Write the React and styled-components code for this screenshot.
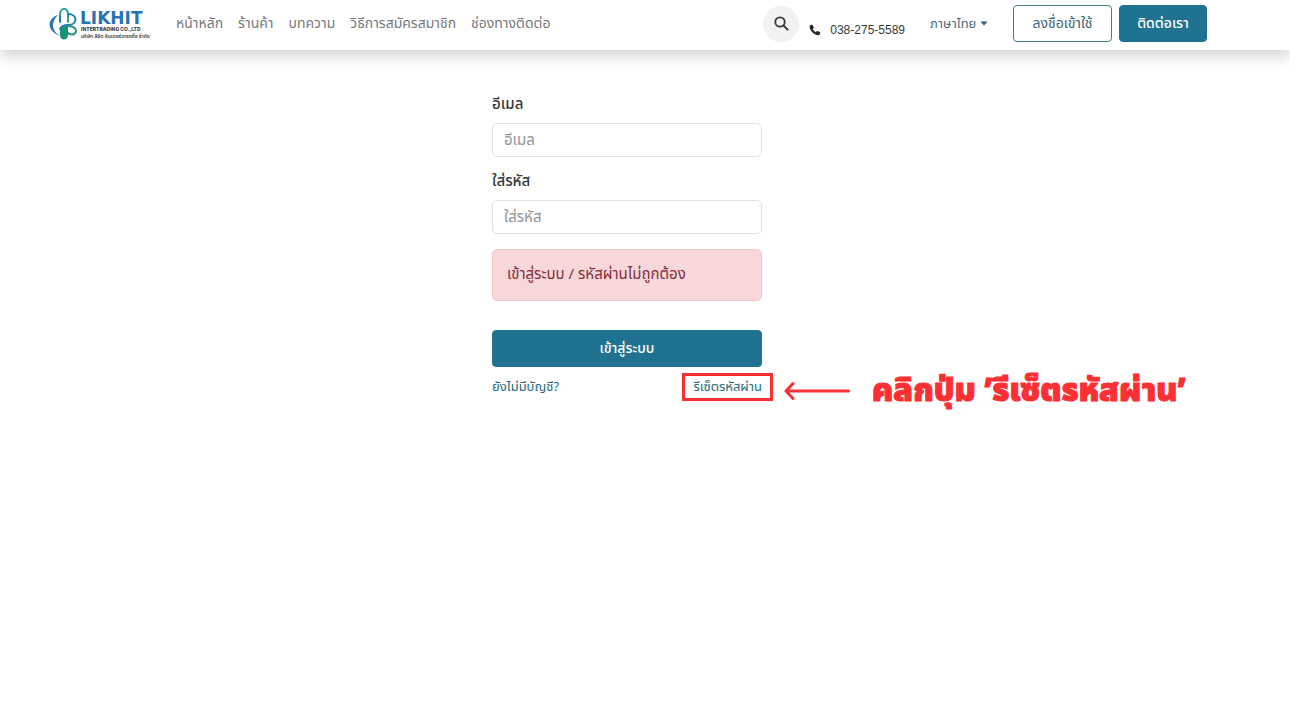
import React from "react";
import styled, { createGlobalStyle } from "styled-components";

const thai = `"Noto Sans Thai", "Noto Sans", "Liberation Sans", sans-serif`;
const teal = "#1f7391";
const red = "#fb3034";

const GlobalStyle = createGlobalStyle`
  *, *::before, *::after { box-sizing: border-box; }
  body { margin: 0; background: #fff; color: #33383d; font: 15px/20px ${thai}; }
  button, input, select { font: inherit; }
  a { text-decoration: none; }
`;

const Header = styled.header`
  display: flex;
  align-items: center;
  min-height: 50px;
  padding: 0 83px 3px 48px;
  background: #fff;
  box-shadow: 0 6px 16px rgba(0, 0, 0, 0.18);
`;

const Brand = styled.a`
  display: flex;
  margin-right: 30px;
`;

const Nav = styled.nav`
  display: flex;
  flex: 1;
  gap: 15px;
`;

const NavLink = styled.a`
  color: #76797c;
  font-size: 14px;
  white-space: nowrap;
`;

const Tools = styled.div`
  display: flex;
  align-items: center;
`;

const SearchButton = styled.button`
  display: grid;
  place-items: center;
  width: 36px;
  height: 36px;
  padding: 0;
  border: 0;
  border-radius: 50%;
  background: #f2f2f2;
`;

const Phone = styled.a`
  display: flex;
  align-items: center;
  gap: 9px;
  margin: 12px 25px 0 10px;
  color: #34383c;
  font-family: "Liberation Sans", sans-serif;
  font-size: 12px;
  white-space: nowrap;
`;

const Language = styled.label`
  display: flex;
  align-items: center;
  margin-right: 25px;
  color: #48697a;
`;

const LanguageSelect = styled.select`
  appearance: none;
  width: 50px;
  height: 28px;
  padding: 0;
  border: 0;
  background: transparent;
  color: inherit;
  font-size: 13px;
`;

const Button = styled.button`
  width: ${(p) => p.$width};
  height: 37px;
  padding: 0;
  border: 1px solid ${(p) => (p.$outline ? "#447f88" : teal)};
  border-radius: 4px;
  background: ${(p) => (p.$outline ? "#fff" : teal)};
  color: ${(p) => (p.$outline ? "#3d6678" : "#fff")};
  font-size: 14px;
  font-weight: ${(p) => (p.$outline ? 400 : 500)};
  white-space: nowrap;
`;

const Actions = styled.div`
  display: flex;
  gap: 7px;
`;

const Main = styled.main`
  display: flex;
  justify-content: center;
  padding: 45px 36px 48px 0;
`;

const Form = styled.form`
  width: 270px;
`;

const Field = styled.div`
  display: flex;
  flex-direction: column;
  gap: 8px;
  margin-bottom: 15px;
`;

const FieldLabel = styled.label`
  font-weight: 500;
`;

const Input = styled.input`
  width: 100%;
  height: 34px;
  padding: 0 11px;
  border: 1px solid #dfe1e3;
  border-radius: 5px;
  background: #fff;
  &::placeholder { color: #929598; opacity: 1; }
`;

const Alert = styled.p`
  margin: 0 0 29px;
  padding: 15px 14px;
  border: 1px solid #f4c4ca;
  border-radius: 5px;
  background: #f8d7da;
  color: #842d38;
`;

const Links = styled.div`
  display: flex;
  justify-content: space-between;
  padding-top: 10px;
`;

const TextLink = styled.a`
  position: relative;
  color: #286b7e;
  font-size: 13px;
  white-space: nowrap;
`;

const Highlight = styled.span`
  position: absolute;
  inset: -4px -11px -4px -11px;
  border: 3px solid ${red};
`;

const Callout = styled.span`
  position: absolute;
  top: -6px;
  left: 100%;
  display: flex;
  align-items: center;
  gap: 22px;
  margin-left: 22px;
  color: ${red};
  font-size: 32px;
  font-weight: 900;
  line-height: 40px;
  -webkit-text-stroke: 1px ${red};
`;

const LogoDrawing = styled.svg`
  display: block;
  overflow: visible;
`;

const Logo = () => (
  <LogoDrawing width="98" height="36" viewBox="0 0 98 36" role="img" aria-label="Likhit Intertrading">
    <g fill="none" strokeLinecap="round">
      <path d="M10 9C-2 13-1 25 12 30C3 24 3 16 10 9Z" fill="#2878b8" />
      <path d="M12 9C12 1 20 1 20 8V16" stroke="#2aa78a" strokeWidth="2" />
      <path d="M12 10V16M20 8C30 8 30 19 20 19C16 19 13 20 12 23" stroke="#2878b8" strokeWidth="2" />
      <path d="M20 20C28 20 30 26 26 28C24 29 21 28 20 27" stroke="#289579" strokeWidth="2" />
      <path d="M12 23C14 20 17 20 20 20V29C20 35 12 35 12 29Z" fill="#159278" />
    </g>
    <text x="32" y="18" fill="#2874b2" fontFamily="DejaVu Sans, sans-serif" fontSize="17" fontWeight="700">LIKHIT</text>
    <text x="33" y="25" fill="#3c4148" fontFamily="Inter, sans-serif" fontSize="5" fontWeight="800">INTERTRADING CO.,LTD</text>
    <text x="33" y="32" fill="#34383e" fontFamily="Noto Sans Thai, sans-serif" fontSize="5" fontWeight="600">บริษัท ลิขิต อินเตอร์เทรดดิ้ง จำกัด</text>
  </LogoDrawing>
);

const SearchIcon = () => (
  <svg width="15" height="15" viewBox="0 0 15 15" fill="none" stroke="#33373b" aria-hidden="true">
    <circle cx="6" cy="6" r="4.700" strokeWidth="1.800" />
    <path d="m9.600 9.600 4 4" strokeWidth="2" strokeLinecap="round" />
  </svg>
);

const PhoneIcon = () => (
  <svg width="12" height="12" viewBox="0 0 12 12" aria-hidden="true">
    <path fill="#24282c" d="M2.7.7 1 1.5C.6 2 .5 2.5.6 3.1c.7 4.3 4.1 7.7 8.4 8.2.7.1 1.2-.1 1.5-.6l.8-1.5c.2-.4 0-.8-.4-1L8.700 7.100c-.3-.2-.7-.1-1 .2l-.9 1C5.400 7.600 4.300 6.500 3.600 5.100l1-.9c.3-.3.4-.7.2-1L3.600 1.100C3.400.7 3.100.5 2.700.7Z" />
  </svg>
);

const ArrowIcon = () => (
  <svg width="66" height="20" viewBox="0 0 66 20" fill="none" stroke={red} strokeWidth="3" strokeLinecap="round" strokeLinejoin="round" aria-hidden="true">
    <path d="M64.500 10H2M9 2.500 2 10l7 7.500" />
  </svg>
);

const Caret = () => (
  <svg width="8" height="5" viewBox="0 0 8 5" aria-hidden="true">
    <path d="M.5.5h7L4 4.500Z" fill="#315b6d" />
  </svg>
);

const pages = ["หน้าหลัก", "ร้านค้า", "บทความ", "วิธีการสมัครสมาชิก", "ช่องทางติดต่อ"];

export default function App() {
  return (
    <>
      <GlobalStyle />
      <Header>
        <Brand href="#"><Logo /></Brand>
        <Nav>
          {pages.map((page) => <NavLink href="#" key={page}>{page}</NavLink>)}
        </Nav>
        <Tools>
          <SearchButton type="button" aria-label="ค้นหา"><SearchIcon /></SearchButton>
          <Phone href="tel:038-275-5589"><PhoneIcon />038-275-5589</Phone>
          <Language>
            <LanguageSelect aria-label="ภาษา"><option>ภาษาไทย</option></LanguageSelect>
            <Caret />
          </Language>
          <Actions>
            <Button type="button" $outline $width="99px">ลงชื่อเข้าใช้</Button>
            <Button type="button" $width="88px">ติดต่อเรา</Button>
          </Actions>
        </Tools>
      </Header>
      <Main>
        <Form>
          <Field>
            <FieldLabel htmlFor="email">อีเมล</FieldLabel>
            <Input id="email" type="email" placeholder="อีเมล" />
          </Field>
          <Field>
            <FieldLabel htmlFor="password">ใส่รหัส</FieldLabel>
            <Input id="password" type="password" placeholder="ใส่รหัส" />
          </Field>
          <Alert role="alert">เข้าสู่ระบบ / รหัสผ่านไม่ถูกต้อง</Alert>
          <Button type="button" $width="100%">เข้าสู่ระบบ</Button>
          <Links>
            <TextLink href="#">ยังไม่มีบัญชี?</TextLink>
            <TextLink href="#">
              รีเซ็ตรหัสผ่าน
              <Highlight />
              <Callout><ArrowIcon />คลิกปุ่ม ’รีเซ็ตรหัสผ่าน’</Callout>
            </TextLink>
          </Links>
        </Form>
      </Main>
    </>
  );
}
